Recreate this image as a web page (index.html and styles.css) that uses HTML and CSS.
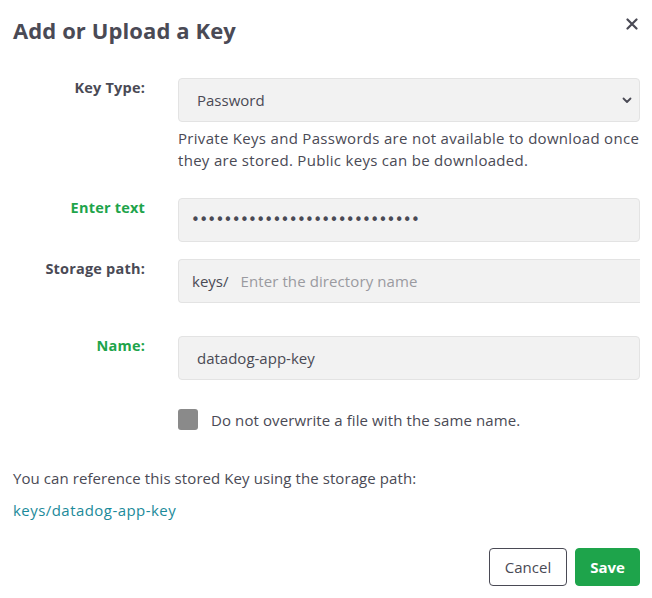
FILE: index.html
```html
<!DOCTYPE html>
<html>
<head>
<meta charset="utf-8">
<link rel="stylesheet" href="styles.css">
</head>
<body>
<div class="modal">
  <div class="header">
    <h1 class="title">Add or Upload a Key</h1>
    <span class="close">
      <svg width="12" height="12" viewBox="0 0 12 12"><path d="M1.5 1.5 L10.5 10.5 M10.5 1.5 L1.5 10.5" stroke="#4a4a55" stroke-width="2.2" stroke-linecap="round"/></svg>
    </span>
  </div>
  <div class="form">
    <div class="row row-type">
      <label class="label">Key Type:</label>
      <div class="field">
        <div class="select">
          <span>Password</span>
          <svg class="chev" width="10" height="7" viewBox="0 0 10 7"><path d="M1.5 1.5 L5 5 L8.5 1.5" stroke="#4a4a55" stroke-width="1.8" fill="none" stroke-linecap="round" stroke-linejoin="round"/></svg>
        </div>
        <p class="help">Private Keys and Passwords are not available to download once they are stored. Public keys can be downloaded.</p>
      </div>
    </div>
    <div class="row row-text">
      <label class="label green">Enter text</label>
      <div class="field">
        <div class="input dots">••••••••••••••••••••••••••••</div>
      </div>
    </div>
    <div class="row row-path">
      <label class="label">Storage path:</label>
      <div class="field">
        <div class="input open"><span class="prefix">keys/</span><span class="ph">Enter the directory name</span></div>
      </div>
    </div>
    <div class="row row-name">
      <label class="label green">Name:</label>
      <div class="field">
        <div class="input">datadog-app-key</div>
      </div>
    </div>
    <div class="row row-check">
      <span class="label"></span>
      <div class="field check">
        <span class="box"></span>
        <span class="check-text">Do not overwrite a file with the same name.</span>
      </div>
    </div>
  </div>
  <p class="ref">You can reference this stored Key using the storage path:</p>
  <p class="link">keys/datadog-app-key</p>
  <div class="footer">
    <button class="btn cancel">Cancel</button>
    <button class="btn save">Save</button>
  </div>
</div>
</body>
</html>
```
FILE: styles.css
```css
* { box-sizing: border-box; }
html, body { margin: 0; padding: 0; background: #fff; }
body {
  font-family: "Open Sans", "Noto Sans", sans-serif;
  font-size: 15px;
  color: #4a4a55;
}
.modal { padding: 0 12px 0 13px; width: 652px; }
.header {
  display: flex;
  justify-content: space-between;
  align-items: center;
  height: 58px;
  padding-top: 1px;
}
.title {
  margin: 0;
  font-size: 22px;
  font-weight: 700;
  color: #4a4a55;
  letter-spacing: 0.1px;
}
.close { display: flex; padding-right: 2px; margin-top: -12px; }
.form { display: flex; flex-direction: column; padding-top: 20px; }
.row { display: grid; grid-template-columns: 132px 1fr; column-gap: 33px; }
.label {
  text-align: right;
  font-weight: 700;
  color: #4a4a55;
  line-height: 20px;
  font-size: 14.5px;
  letter-spacing: 0.2px;
}
.label.green { color: #1ea44b; }
.field { min-width: 0; }
.select, .input {
  height: 44px;
  background: #f2f2f2;
  border: 1px solid #e3e3e3;
  border-radius: 4px;
  display: flex;
  align-items: center;
  padding: 0 7px 0 18px;
}
.select { justify-content: space-between; }
.help { margin: 5px 0 0; line-height: 22px; letter-spacing: 0.3px; }
.row-text { margin-top: 27px; }
.row-path { margin-top: 17px; }
.row-name { margin-top: 33px; }
.row-check { margin-top: 29px; }
.dots {
  font-family: "DejaVu Sans", sans-serif;
  color: #4a4a55;
  font-size: 15px;
  letter-spacing: -0.7px;
  padding-left: 12px;
}
.input.open { border-right: none; border-radius: 4px 0 0 4px; padding-left: 13px; }
.prefix { color: #4a4a55; margin-right: 12px; }
.ph { color: #9a9aa0; letter-spacing: 0.1px; }
.check { display: flex; align-items: center; gap: 13px; }
.check-text { letter-spacing: 0.1px; }
.box { width: 20px; height: 21px; border-radius: 3px; background: #8a8a8a; display: inline-block; }
.ref { margin: 38px 0 0; line-height: 20px; letter-spacing: 0.08px; }
.link { margin: 12px 0 0; color: #1b8a9a; line-height: 20px; letter-spacing: 0.45px; }
.footer { display: flex; justify-content: flex-end; gap: 8px; margin-top: 28px; }
.btn {
  font-family: inherit;
  font-size: 15px;
  height: 38px;
  border-radius: 4px;
  padding: 0 8px;
  cursor: pointer;
}
.cancel { background: #fff; border: 1px solid #4a4a55; color: #4a4a55; width: 78px; }
.save { background: #1ea44b; border: 1px solid #1ea44b; color: #fff; font-weight: 700; width: 65px; }
```
